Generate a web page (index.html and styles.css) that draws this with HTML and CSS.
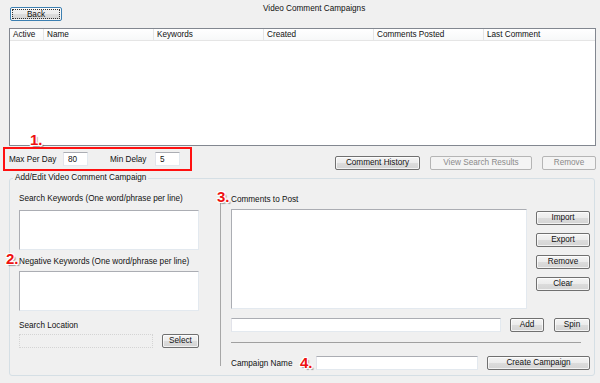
FILE: index.html
```html
<!DOCTYPE html>
<html>
<head>
<meta charset="utf-8">
<link rel="stylesheet" href="styles.css">
</head>
<body>
<div class="app">
  <div class="topbar">
    <button class="btn btn-default">Back</button>
    <div class="title">Video Comment Campaigns</div>
  </div>

  <div class="grid">
    <div class="grid-head">
      <div class="col c-active">Active</div>
      <div class="col c-name">Name</div>
      <div class="col c-kw">Keywords</div>
      <div class="col c-created">Created</div>
      <div class="col c-posted">Comments Posted</div>
      <div class="col c-last">Last Comment</div>
    </div>
  </div>

  <div class="settings-row">
    <div class="redbox">
      <span class="num num-1">1.</span>
      <span class="lbl">Max Per Day</span>
      <input class="field small" value="80">
      <span class="lbl lbl-delay">Min Delay</span>
      <input class="field small" value="5">
    </div>
    <div class="actions">
      <button class="btn w-history">Comment History</button>
      <button class="btn disabled w-results">View Search Results</button>
      <button class="btn disabled w-remove">Remove</button>
    </div>
  </div>

  <fieldset class="group">
    <legend>Add/Edit Video Comment Campaign</legend>
    <div class="group-body">
      <div class="left">
        <div class="lbl-row">Search Keywords (One word/phrase per line)</div>
        <textarea class="area kw kw1"></textarea>
        <div class="lbl-row neg"><span class="num num-2">2.</span>Negative Keywords (One word/phrase per line)</div>
        <textarea class="area kw kw2"></textarea>
        <div class="lbl-row loc">Search Location</div>
        <div class="loc-row">
          <input class="field loc-input" disabled>
          <button class="btn w-select">Select</button>
        </div>
      </div>
      <div class="right">
        <div class="lbl-row ctp"><span class="num num-3">3.</span>Comments to Post</div>
        <div class="comments">
          <textarea class="area big"></textarea>
          <div class="side-btns">
            <button class="btn w-side">Import</button>
            <button class="btn w-side">Export</button>
            <button class="btn w-side">Remove</button>
            <button class="btn w-side">Clear</button>
          </div>
        </div>
        <div class="add-row">
          <input class="field add-input">
          <button class="btn w-add">Add</button>
          <button class="btn w-spin">Spin</button>
        </div>
        <div class="sep"></div>
        <div class="name-row">
          <span class="lbl">Campaign Name</span>
          <span class="num num-4">4.</span>
          <input class="field name-input">
          <button class="btn w-create">Create Campaign</button>
        </div>
      </div>
    </div>
  </fieldset>
</div>
</body>
</html>
```

FILE: styles.css
```css
* { box-sizing: border-box; }
html, body { margin: 0; padding: 0; }
body {
  width: 600px;
  height: 383px;
  background: #f0f0f0;
  font-family: "Liberation Sans", Arial, sans-serif;
  font-size: 8.2px;
  color: #111;
  overflow: hidden;
}
.app { position: relative; width: 600px; height: 383px; }

.btn {
  font-family: inherit;
  font-size: 8.2px;
  color: #111;
  height: 14px;
  padding: 0;
  margin: 0;
  border: 1px solid #707070;
  border-radius: 2px;
  background: linear-gradient(#f4f4f4 0%, #ececec 48%, #dcdcdc 52%, #d4d4d4 100%);
  box-shadow: inset 0 0 0 1px rgba(255,255,255,.7);
  line-height: 12px;
  text-align: center;
}
.btn.disabled {
  border-color: #b5b5b5;
  color: #8a8a8a;
  background: #f4f4f4;
  box-shadow: none;
}
.btn-default {
  border-color: #3c7fb1;
  outline: 1px dotted #333;
  outline-offset: -3px;
  width: 52px;
  height: 14px;
  line-height: 11px;
}

.topbar {
  display: flex;
  align-items: flex-start;
  height: 28px;
  padding: 7px 0 0 10px;
}
.title {
  margin-left: 201px;
  margin-top: -4px;
  line-height: 12px;
}

.grid {
  margin-left: 9px;
  width: 587px;
  height: 118px;
  background: #fff;
  border: 1px solid #828790;
}
.grid-head {
  display: flex;
  height: 12px;
  line-height: 12px;
  background: linear-gradient(#fff, #f7f8f9);
  border-bottom: 1px solid #e5e5e5;
}
.col {
  padding-left: 3px;
  border-right: 1px solid #e5e5e5;
  white-space: nowrap;
}
.c-active { width: 34px; }
.c-name { width: 110px; }
.c-kw { width: 110px; }
.c-created { width: 110px; }
.c-posted { width: 110px; }
.c-last { flex: 1; border-right: none; }

.settings-row {
  display: flex;
  align-items: flex-end;
  margin-top: 1px;
  height: 24px;
}
.redbox {
  position: relative;
  display: flex;
  align-items: center;
  margin-left: 3px;
  width: 189px;
  height: 24px;
  border: 2px solid #ff1010;
  padding-left: 4px;
}
.redbox .lbl { width: 54px; }
.redbox .lbl-delay { margin-left: 22px; width: 45px; }
.field {
  font-family: inherit;
  font-size: 8.2px;
  color: #111;
  height: 14px;
  margin: 0;
  padding: 0 0 0 4px;
  background: #fff;
  border: 1px solid #e3e9ef;
  border-top-color: #abadb3;
  border-left-color: #e2e3ea;
  outline: none;
}
.field.small { width: 25px; }
.actions {
  display: flex;
  gap: 10px;
  margin-left: 143px;
  margin-bottom: 1px;
}
.w-history { width: 85px; }
.w-results { width: 102px; }
.w-remove { width: 54px; }

.num {
  position: absolute;
  font-family: "Liberation Sans", Arial, sans-serif;
  font-weight: bold;
  font-size: 15px;
  line-height: 15px;
  color: #ee1111;
  text-shadow:
    -1px -1px 0 #fff, 1px -1px 0 #fff, -1px 1px 0 #fff, 1px 1px 0 #fff,
    2px 2px 1px rgba(0,0,0,.35);
}
.num-1 { left: 25px; top: -17px; }
.num-2 { left: -13px; top: -5px; }
.num-3 { left: -14px; top: -5px; }
.num-4 { left: 69px; top: -1px; }

.group {
  margin: 2px 0 0 9px;
  width: 586px;
  height: 203px;
  border: 1px solid #d5dfe5;
  border-radius: 3px;
  padding: 0;
  position: relative;
}
.group legend {
  padding: 0 2px;
  margin-left: 3px;
  line-height: 10px;
}
.group-body {
  display: flex;
  padding: 10px 0 0 9px;
}
.left {
  width: 180px;
  display: flex;
  flex-direction: column;
}
.lbl-row { position: relative; height: 11px; line-height: 11px; white-space: nowrap; }
.area {
  display: block;
  resize: none;
  margin: 0;
  background: #fff;
  border: 1px solid #e3e9ef;
  border-top-color: #abadb3;
  border-left-color: #abadb3;
  outline: none;
}
.area.kw { width: 180px; height: 40px; }
.area.kw1 { margin-top: 6px; }
.area.kw2 { margin-top: 4px; }
.lbl-row.neg { margin-top: 6px; }
.lbl-row.loc { margin-top: 9px; }
.loc-row { display: flex; margin-top: 3px; }
.loc-input {
  width: 134px;
  background: #f0f0f0;
  border: 1px dotted #d4d4d4;
}
.w-select { width: 37px; margin-left: 9px; }

.right {
  margin-left: 21px;
  padding-left: 10px;
  border-left: 1px solid #a7a7a7;
  height: 173px;
  margin-top: 0;
}
.lbl-row.ctp { margin-top: 1px; }
.comments { display: flex; margin-top: 4px; }
.area.big { width: 296px; height: 100px; }
.side-btns {
  display: flex;
  flex-direction: column;
  gap: 8px;
  margin-left: 9px;
  padding-top: 2px;
}
.w-side { width: 54px; height: 14px; }
.add-row { display: flex; align-items: center; margin-top: 9px; }
.add-input { width: 270px; }
.w-add { width: 34px; margin-left: 9px; }
.w-spin { width: 36px; margin-left: 10px; }
.sep {
  width: 350px;
  height: 1px;
  background: #a0a0a0;
  margin-top: 10px;
}
.name-row { position: relative; display: flex; align-items: center; margin-top: 13px; }
.name-row .lbl { width: 85px; white-space: nowrap; }
.name-input { width: 162px; }
.w-create { width: 103px; margin-left: 9px; }
```
